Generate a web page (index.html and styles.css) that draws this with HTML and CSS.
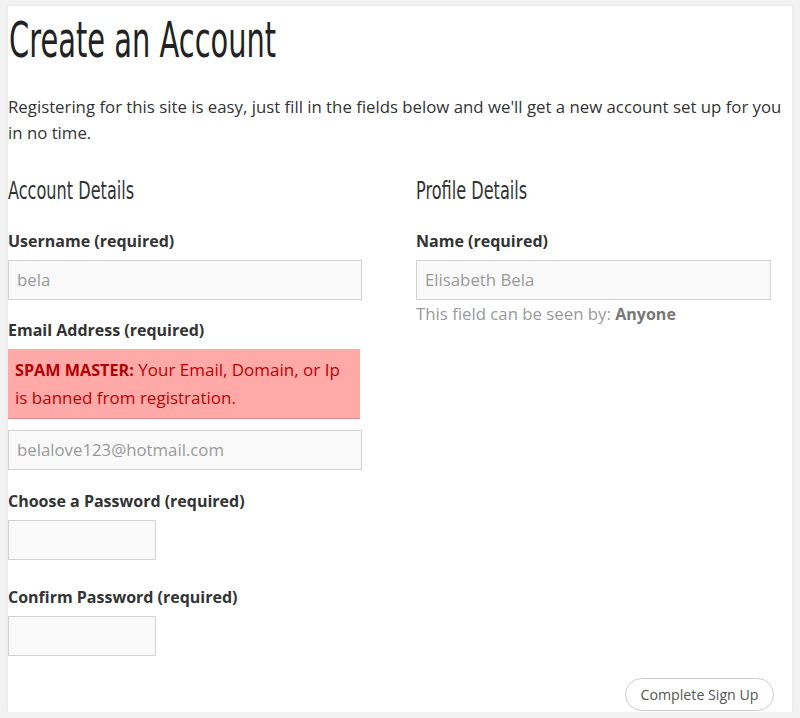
FILE: index.html
```html
<!DOCTYPE html>
<html lang="en">
<head>
<meta charset="utf-8">
<title>Create an Account</title>
<link rel="stylesheet" href="styles.css">
</head>
<body>
<div class="card">
  <h1 class="title"><span class="narrow title-text">Create an Account</span></h1>
  <p class="intro">Registering for this site is easy, just fill in the fields below and we'll get a new account set up for you in no time.</p>
  <div class="columns">
    <div class="col">
      <h2 class="section"><span class="narrow section-text">Account Details</span></h2>
      <label class="label">Username (required)</label>
      <div class="input wide">bela</div>
      <label class="label gap">Email Address (required)</label>
      <div class="error"><strong>SPAM MASTER:</strong> Your Email, Domain, or Ip is banned from registration.</div>
      <div class="input wide after-error">belalove123@hotmail.com</div>
      <label class="label gap-b">Choose a Password (required)</label>
      <div class="input short"></div>
      <label class="label gap2">Confirm Password (required)</label>
      <div class="input short"></div>
    </div>
    <div class="col">
      <h2 class="section"><span class="narrow section-text">Profile Details</span></h2>
      <label class="label">Name (required)</label>
      <div class="input wide">Elisabeth Bela</div>
      <p class="help">This field can be seen by: <strong>Anyone</strong></p>
    </div>
  </div>
  <div class="actions">
    <button class="submit" type="button">Complete Sign Up</button>
  </div>
</div>
</body>
</html>
```

FILE: styles.css
```css
html, body {
  margin: 0;
  padding: 0;
  background: #f2f2f2;
}
body {
  font-family: "Open Sans", "Liberation Sans", sans-serif;
  color: #333;
}
.card {
  margin: 6px 8px 0 8px;
  height: 706px;
  box-sizing: border-box;
  background: #fff;
  padding: 0 8px 0 0;
  box-shadow: 0 0 3px rgba(0,0,0,0.08);
  display: flex;
  flex-direction: column;
}
.narrow {
  display: inline-block;
  transform-origin: 0 50%;
  white-space: nowrap;
}
.title {
  margin: 0;
  padding-top: 5px;
  font-family: "DejaVu Sans", sans-serif;
  font-weight: 400;
  font-size: 49px;
  line-height: 60px;
  height: 60px;
  color: #222;
}
.title-text {
  transform: scaleX(0.59);
  margin-left: 1px;
}
.intro {
  margin: 23px 0 0;
  font-size: 16.8px;
  line-height: 26px;
  color: #333;
}
.columns {
  display: grid;
  grid-template-columns: 354px 355px;
  column-gap: 54px;
  margin-top: 31px;
}
.section {
  margin: 0;
  font-family: "DejaVu Sans", sans-serif;
  font-weight: 400;
  font-size: 24px;
  line-height: 28px;
  height: 28px;
  color: #333;
}
.section-text {
  transform: scaleX(0.672);
}
.label {
  display: block;
  margin-top: 24px;
  font-weight: 700;
  font-size: 16px;
  line-height: 24px;
  color: #333;
}
.label.gap { margin-top: 18px; }
.label.gap-b { margin-top: 19px; }
.label.gap2 { margin-top: 25px; }
.input {
  box-sizing: border-box;
  height: 40px;
  margin-top: 7px;
  background: #f9f9f9;
  border: 1px solid #d2d2d2;
  padding: 0 8px;
  font-size: 16.8px;
  line-height: 38px;
  color: #999;
  white-space: nowrap;
}
.input.wide { width: 100%; }
.col:first-child .input.wide { width: 354px; }
.input.short { width: 148px; }
.input.after-error { margin-top: 11px; }
.error {
  margin-top: 7px;
  width: 352px;
  box-sizing: border-box;
  background: #ffa9a9;
  border-bottom: 1px solid #e08a8a;
  padding: 7px 12px 6px 7px;
  font-size: 17px;
  line-height: 28px;
  color: #c00000;
}
.error strong { color: #b00000; font-size: 16.2px; line-height: 28px; }
.help {
  margin: 2px 0 0;
  font-size: 16.8px;
  line-height: 24px;
  color: #999;
}
.help strong { color: #777; font-weight: 700; font-size: 16px; }
.actions {
  margin-top: auto;
  display: flex;
  justify-content: flex-end;
  padding-right: 10px;
}
.submit {
  height: 33px;
  width: 149px;
  border: 1px solid #ccc;
  border-radius: 17px;
  background: #fff;
  font-family: "Open Sans", "Liberation Sans", sans-serif;
  font-size: 14.2px;
  color: #555;
  padding: 0;
  margin-bottom: 1px;
}
```
